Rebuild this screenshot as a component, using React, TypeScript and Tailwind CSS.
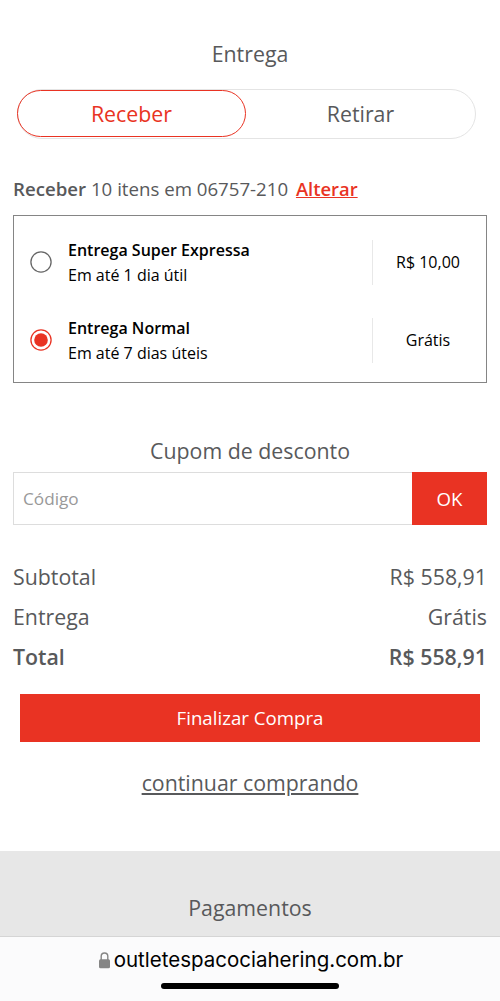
const sans = "font-['Open_Sans',sans-serif]";

function Radio({ on }: { on?: boolean }) {
  return (
    <svg width="22" height="22" viewBox="0 0 22 22" fill="none">
      <circle cx="11" cy="11" r="10.1" stroke={on ? "#e93323" : "#666"} strokeWidth="1.3" />
      {on && <circle cx="11" cy="11" r="6.8" fill="#e93323" />}
    </svg>
  );
}

function Option({ title, sub, price, on }: { title: string; sub: string; price: string; on?: boolean }) {
  return (
    <div className="flex h-[78px] items-center pl-4">
      <Radio on={on} />
      <div className="ml-4 w-[304px] pt-px text-[16px] leading-[25px] text-black">
        <div className="font-semibold">{title}</div>
        <div>{sub}</div>
      </div>
      <div className="flex h-[45px] flex-1 items-center justify-center border-l border-[#e8e8e8] pr-[3px] text-[16px] text-black">{price}</div>
    </div>
  );
}

function Row({ label, value, bold }: { label: string; value: string; bold?: boolean }) {
  return (
    <div className={bold ? "flex h-10 items-center justify-between font-semibold" : "flex h-10 items-center justify-between"}>
      <span>{label}</span>
      <span>{value}</span>
    </div>
  );
}

export default function App() {
  return (
    <div className={`${sans} flex h-[1001px] w-[500px] flex-col overflow-hidden bg-white text-[21.33px] text-[#58595b]`}>
      <main className="flex h-[851px] flex-col px-[13px] pt-[38px]">
        <h2 className="text-center leading-8">Entrega</h2>
        <div className="mx-1 mt-[19px] flex h-[50px] w-[459px] rounded-full border-[1.5px] border-[#e4e4e4]">
          <div className="-ml-px flex h-[47px] w-[229px] items-center justify-center rounded-full border-[1.5px] border-[#e93323] text-[#e93323]">Receber</div>
          <div className="flex flex-1 items-center justify-center">Retirar</div>
        </div>
        <p className="mt-[36px] text-[18.67px] leading-7">
          <b className="font-semibold">Receber</b> 10 itens em 06757-210 <span className="ml-[3px] text-[18.4px] font-semibold text-[#e93323] underline">Alterar</span>
        </p>
        <section className="mt-[12px] h-[168px] w-[474px] border border-[#858585] pt-[7px]">
          <Option title="Entrega Super Expressa" sub="Em até 1 dia útil" price="R$ 10,00" />
          <Option title="Entrega Normal" sub="Em até 7 dias úteis" price="Grátis" on />
        </section>
        <h2 className="mt-[52px] text-center leading-8">Cupom de desconto</h2>
        <div className="mt-[5px] flex h-[53px] w-[474px]">
          <div className="flex flex-1 items-center border border-r-0 border-[#ddd] pl-[9px] text-[17.2px] text-[#999]">Código</div>
          <div className="flex w-[75px] items-center justify-center bg-[#e93323] text-[18.67px] font-medium text-white">OK</div>
        </div>
        <div className="mt-[32px]">
          <Row label="Subtotal" value="R$ 558,91" />
          <Row label="Entrega" value="Grátis" />
          <Row label="Total" value="R$ 558,91" bold />
        </div>
        <div className="mx-[7px] mt-[17px] flex h-12 items-center justify-center bg-[#e93323] pb-px text-[18.67px] text-white">Finalizar Compra</div>
        <a className="mt-[25px] text-center leading-8 underline">continuar comprando</a>
      </main>
      <section className="h-[85px] bg-[#e7e7e7] pt-[41px] text-center leading-8">Pagamentos</section>
      <footer className="flex h-[65px] flex-col items-center border-t border-[#d5d5d5] bg-[#fbfbfc] font-['Inter',sans-serif] text-[20.5px] text-black">
        <div className="mt-[8px] flex h-[30px] items-center gap-[4px] pl-[2px]">
          <svg width="11" height="17" viewBox="0 0 11 17"><path d="M2.2 8V4.3a3.3 3.3 0 0 1 6.6 0V8" fill="none" stroke="#858585" strokeWidth="1.4" /><rect y="7.3" width="11" height="9" rx="1.5" fill="#858585" /></svg>
          <span>outletespacociahering.com.br</span>
        </div>
        <div className="mt-[8px] h-[6px] w-[178px] rounded-full bg-black" />
      </footer>
    </div>
  );
}
